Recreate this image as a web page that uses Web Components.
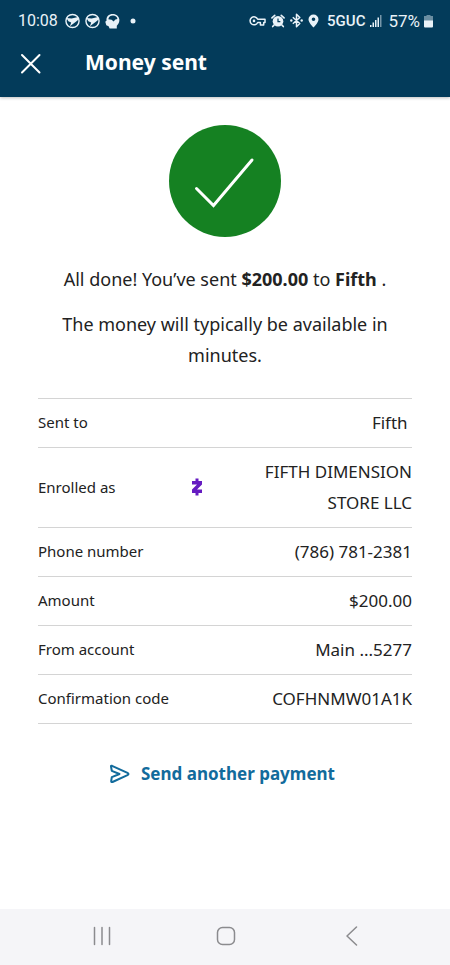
<!DOCTYPE html>
<html lang="en">
<head>
<meta charset="utf-8">
<meta name="viewport" content="width=device-width, initial-scale=1">
<title>Money sent</title>
<style>
  body { margin: 0; background: #fff; font-family: "Noto Sans", sans-serif; color: #222; }
</style>
</head>
<body>
<payment-screen>
  <status-bar slot="top" time="10:08" network="5GUC" battery="57%"></status-bar>
  <app-bar slot="top">Money sent</app-bar>
  <success-badge></success-badge>
  <status-message>
    <p>All done! You’ve sent <b>$200.00</b> to <b>Fifth</b> .</p>
    <p>The money will typically be available in minutes.</p>
  </status-message>
  <payment-details></payment-details>
  <action-link href="#send">Send another payment</action-link>
  <system-nav slot="bottom"></system-nav>
</payment-screen>

<script>
const define = (name, html, setup) => {
  const template = document.createElement('template');
  template.innerHTML = html;
  customElements.define(name, class extends HTMLElement {
    constructor() {
      super();
      this.attachShadow({ mode: 'open' }).append(template.content.cloneNode(true));
    }
    connectedCallback() {
      if (setup) setup(this, this.shadowRoot);
    }
  });
};

define('payment-screen', `
  <style>
    :host { display: flex; flex-direction: column; min-height: 100vh; }
    header { background: #033b5a; color: #fff; box-shadow: 0 1px 3px rgba(0, 0, 0, .25); }
    main { flex: 1; display: flex; flex-direction: column; align-items: center; gap: 27px; padding: 28px 38px; }
  </style>
  <header><slot name="top"></slot></header>
  <main><slot></slot></main>
  <slot name="bottom"></slot>`);

define('status-bar', `
  <style>
    :host { display: flex; justify-content: space-between; align-items: center; height: 41px; padding: 0 17px 0 18px;
      box-sizing: border-box; color: #e9f2f8; font: 16px/20px Roboto, sans-serif; }
    div { display: flex; align-items: center; gap: 5px; }
    #time { margin-right: 2px; }
    .net { font-size: 15px; font-weight: 500; margin-left: 3px; }
    .charge { display: flex; align-items: center; gap: 4px; font-size: 17px; }
    svg { display: block; }
  </style>
  <div>
    <span id="time"></span>
    <svg width="15" height="16" viewBox="0 0 16 16"><circle cx="8" cy="8" r="7" fill="none" stroke="currentColor" stroke-width="1.5"/><path d="M1.5 4.800 7 5.200 14 3.600 14.200 6.600 11.600 8.800 5.200 13.600 6.600 9.600 3.600 8.200Z" fill="currentColor"/></svg>
    <svg width="15" height="16" viewBox="0 0 16 16"><circle cx="8" cy="8" r="7" fill="none" stroke="currentColor" stroke-width="1.5"/><path d="M1.5 4.800 7 5.200 14 3.600 14.200 6.600 11.600 8.800 5.200 13.600 6.600 9.600 3.600 8.200Z" fill="currentColor"/></svg>
    <svg width="15" height="16" viewBox="0 0 15 16"><path d="M1.600 7.400C.8 3.600 4 .9 7.600.9c4 0 6.800 2.700 6.800 6.200 0 3-1.500 4.400-2.600 5.600V15.600H4.600L3.600 13.200 1.300 12.200.3 8.800Z" fill="currentColor"/><path d="M3.300 6.200C3.800 3.500 5.800 2.500 7.900 2.500c2.600 0 4.300 1.500 4.500 3.500L10.400 6.400 8.600 8.600 6.600 6.800Z" fill="#033b5a"/></svg>
    <svg width="14" height="16" viewBox="0 0 14 16"><circle cx="8" cy="8" r="2.500" fill="currentColor"/></svg>
  </div>
  <div>
    <svg width="17" height="12" viewBox="0 0 17 12" fill="none" stroke="currentColor" stroke-width="1.500" stroke-linejoin="round"><path d="M8.700 4.200H16v3.300h-1.300v2.400h-3.300V7.500H8.700A4 4 0 1 1 8.700 4.200Z"/><circle cx="5" cy="5.900" r="1.300" fill="currentColor" stroke="none"/></svg>
    <svg width="14" height="14" viewBox="0 0 15 14"><circle cx="7.500" cy="7.300" r="5.700" fill="currentColor"/><path d="M1 3.700 4 1M14 3.700 11 1M3.200 11.400 1.800 13M11.800 11.400 13.200 13" stroke="currentColor" stroke-width="1.700" stroke-linecap="round"/><path d="M7.500 4.200V7.600H10" fill="none" stroke="#033b5a" stroke-width="1.300"/></svg>
    <svg width="13" height="15" viewBox="1 0 13 15" fill="none" stroke="currentColor" stroke-width="1.500" stroke-linejoin="round"><path d="M3.800 4.300 10.800 10.500 7.500 13.700V1.300L10.800 4.500 3.800 10.700"/><circle cx="2.300" cy="7.500" r="1.200" fill="currentColor" stroke="none"/><circle cx="12.700" cy="7.500" r="1.200" fill="currentColor" stroke="none"/></svg>
    <svg width="11" height="14" viewBox="4 0 10 14"><path fill-rule="evenodd" d="M9 .5a5 5 0 0 1 5 5C14 8.500 9 13.600 9 13.600S4 8.500 4 5.500a5 5 0 0 1 5-5ZM9 3.500a1.800 1.800 0 1 0 0 3.600 1.800 1.800 0 0 0 0-3.600Z" fill="currentColor"/></svg>
    <span class="net" id="network"></span>
    <svg width="13" height="13" viewBox="1 0 13 13" fill="currentColor"><path d="M1 11h1.500v2H1zM3.500 8.500H5V13H3.500zM6 6h1.500v7H6zM8.500 3.500H10V13H8.500z"/><path d="M11 1h1.500v12H11z" opacity=".5"/></svg>
    <span class="charge"><span id="battery"></span>
    <svg width="9" height="14" viewBox="0 0 9 14" fill="currentColor"><path d="M2.500 1h4v1H9v5H0V2h2.500Z" opacity=".45"/><path d="M0 6.500h9V12.500a1 1 0 0 1-1 1H1a1 1 0 0 1-1-1Z"/></svg></span>
  </div>`,
  (host, root) => {
    for (const key of ['time', 'network', 'battery']) root.getElementById(key).textContent = host.getAttribute(key);
  });

define('app-bar', `
  <style>
    :host { display: flex; align-items: center; gap: 43px; padding: 0 20px 14px; }
    button { all: unset; display: flex; align-items: center; width: 22px; height: 42px; cursor: pointer; }
    svg { margin-top: 4px; }
    h1 { margin: 0; font-size: 21px; line-height: 42px; font-weight: 700; }
  </style>
  <button aria-label="Close"><svg width="22" height="22" viewBox="0 0 22 22" fill="none" stroke="#fff" stroke-width="2" stroke-linecap="round"><path d="M2 2 19.500 19.500M19.500 2 2 19.500"/></svg></button>
  <h1><slot></slot></h1>`);

define('success-badge', `
  <style>:host { display: block; } svg { display: block; }</style>
  <svg width="112" height="112" viewBox="0 0 112 112" role="img" aria-label="Success"><circle cx="56" cy="56" r="56" fill="#158122"/><path d="M27.500 63.500 44.500 80.500 83 35" fill="none" stroke="#fff" stroke-width="3" stroke-linecap="round"/></svg>`);

define('status-message', `
  <style>
    :host { display: flex; flex-direction: column; gap: 14px; font-size: 18px; line-height: 31px; text-align: center; }
    ::slotted(p) { margin: 0; }
  </style>
  <slot></slot>`);

define('payment-details', `
  <style>
    :host { display: block; align-self: stretch; }
    table { width: 100%; border-collapse: collapse; border-top: 1px solid #d4d4d4; }
    tr { border-bottom: 1px solid #d4d4d4; }
    th, td { padding: 8px 0 9px; line-height: 31px; }
    th { font-size: 15px; font-weight: 400; text-align: left; }
    td { font-size: 17px; text-align: right; }
    .entry { display: flex; align-items: center; justify-content: flex-end; gap: 49px; }
    .name { width: 160px; }
    svg { display: block; }
  </style>
  <table>
    <tr><th scope="row">Sent to</th><td>Fifth&nbsp;</td></tr>
    <tr><th scope="row">Enrolled as</th><td><div class="entry"><svg width="12" height="18" viewBox="0 0 12 18" role="img" aria-label="Zelle"><path d="M1 3H4.500V.500H7.500V3H11V6.400L6 11.600H11V15H7.500V17.500H4.500V15H1V11.600L6 6.400H1Z" fill="#651bc1"/></svg><span class="name">FIFTH DIMENSION STORE LLC</span></div></td></tr>
    <tr><th scope="row">Phone number</th><td>(786) 781-2381</td></tr>
    <tr><th scope="row">Amount</th><td>$200.00</td></tr>
    <tr><th scope="row">From account</th><td>Main ...5277</td></tr>
    <tr><th scope="row">Confirmation code</th><td>COFHNMW01A1K</td></tr>
  </table>`);

define('action-link', `
  <style>
    :host { display: block; padding: 7px 6px 0 0; }
    a { display: flex; align-items: center; gap: 10px; color: #126b9c; font-size: 17px; line-height: 31px; font-weight: 700; text-decoration: none; }
  </style>
  <a><svg width="22" height="20" viewBox="0 0 22 20" fill="none" stroke="currentColor" stroke-width="2" stroke-linejoin="round" stroke-linecap="round"><path d="M2 2.500Q1.700 1.300 3 1.800L18.500 8.800Q20.500 10 18.500 11.200L3.500 18Q2 18.500 2.200 17L2.800 13.200 10.500 10 2.800 6.800Z"/></svg><slot></slot></a>`,
  (host, root) => { root.querySelector('a').href = host.getAttribute('href'); });

define('system-nav', `
  <style>
    :host { display: block; background: #f5f5f8; }
    nav { display: grid; grid-template-columns: repeat(3, 1fr); padding: 0 37px 2px 40px; height: 54px; }
    button { all: unset; display: grid; place-items: center; cursor: pointer; }
    svg { fill: none; stroke: #8b8b8e; stroke-width: 1.500; stroke-linecap: round; stroke-linejoin: round; }
  </style>
  <nav aria-label="System">
    <button aria-label="Recent apps"><svg width="20" height="20" viewBox="0 0 20 20"><path d="M2.500 1.500v17M10 1.500v17M17.500 1.500v17"/></svg></button>
    <button aria-label="Home"><svg width="20" height="20" viewBox="0 0 20 20"><rect x="1.500" y="1.500" width="17" height="17" rx="5"/></svg></button>
    <button aria-label="Back"><svg width="20" height="20" viewBox="0 0 20 20"><path d="M15.500 1 6 10l9.500 9"/></svg></button>
  </nav>`);
</script>
</body>
</html>
